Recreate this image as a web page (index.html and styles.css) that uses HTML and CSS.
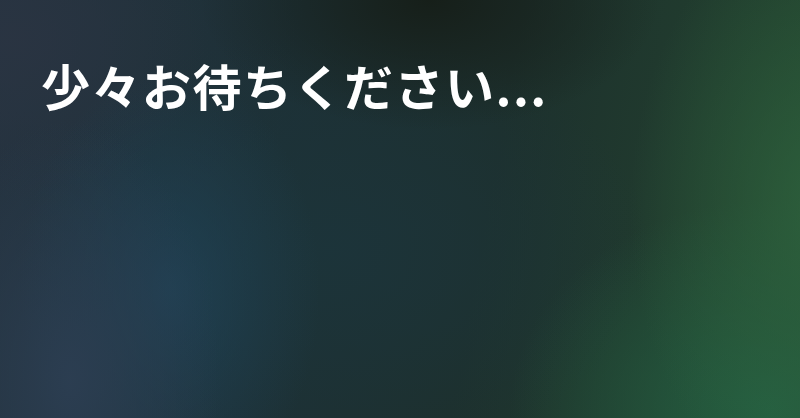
FILE: index.html
```html
<!DOCTYPE html>
<html lang="ja">
<head>
<meta charset="utf-8">
<link rel="stylesheet" href="styles.css">
</head>
<body>
<main class="screen">
  <h1 class="message">少々お待ちください...</h1>
</main>
</body>
</html>
```
FILE: styles.css
```css
html, body {
  margin: 0;
  padding: 0;
  width: 800px;
  height: 418px;
  overflow: hidden;
}
.screen {
  width: 800px;
  height: 418px;
  box-sizing: border-box;
  padding: 55px 0 0 41px;
  background:
    radial-gradient(ellipse 200px 300px at 830px 210px, rgba(46,100,62,0.85), rgba(46,100,62,0) 100%),
    radial-gradient(ellipse 260px 210px at 770px 410px, rgba(36,96,66,0.95), rgba(36,96,66,0) 100%),
    radial-gradient(ellipse 150px 260px at 70px 380px, rgba(44,62,82,0.95), rgba(44,62,82,0) 100%),
    radial-gradient(ellipse 150px 220px at 170px 290px, rgba(32,68,90,0.75), rgba(32,68,90,0) 100%),
    radial-gradient(ellipse 200px 160px at 10px 40px, rgba(42,52,66,0.9), rgba(42,52,66,0) 100%),
    radial-gradient(ellipse 230px 130px at 430px 0px, rgba(22,30,24,0.95), rgba(22,30,24,0) 100%),
    radial-gradient(ellipse 320px 220px at 330px 250px, rgba(28,52,58,0.95), rgba(28,52,58,0) 100%),
    linear-gradient(100deg, #253340 0%, #1d3036 35%, #1d302d 60%, #24462f 100%);
  font-family: "Noto Sans CJK JP", "Noto Sans", sans-serif;
}
.message {
  margin: 0;
  color: #ffffff;
  font-size: 49px;
  font-weight: 700;
  letter-spacing: 1.5px;
  line-height: 60px;
  white-space: nowrap;
}
```
